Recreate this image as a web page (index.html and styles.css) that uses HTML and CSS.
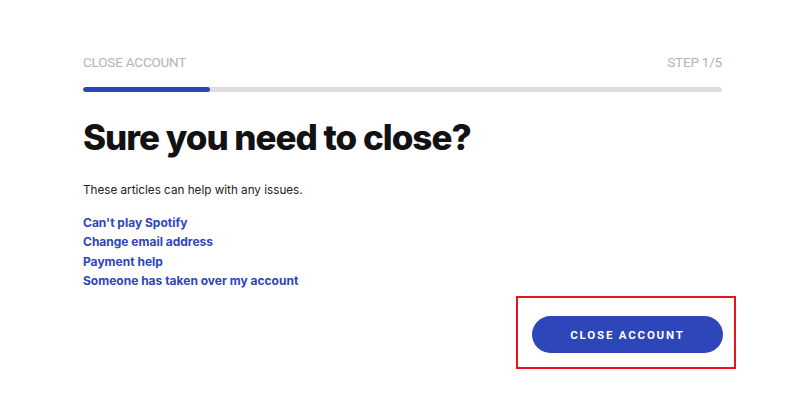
FILE: index.html
```html
<!DOCTYPE html>
<html lang="en">
<head>
  <meta charset="UTF-8" />
  <title>Close account</title>
  <link rel="stylesheet" href="styles.css">
</head>
<body>
  <main class="container">
    <header class="step-header">
      <span>CLOSE ACCOUNT</span>
      <span>STEP 1/5</span>
    </header>

    <!-- Progreso -->
    <div class="progress">
      <div class="progress-fill"></div>
    </div>

    <h1>Sure you need to close?</h1>

    <p class="intro">These articles can help with any issues.</p>

    <ul class="help-links">
      <li><a href="#">Can't play Spotify</a></li>
      <li><a href="#">Change email address</a></li>
      <li><a href="#">Payment help</a></li>
      <li><a href="#">Someone has taken over my account</a></li>
    </ul>

    <div class="actions">
      <div class="highlight">
        <button type="button">CLOSE ACCOUNT</button>
      </div>
    </div>
  </main>
</body>
</html>
```

FILE: styles.css
```css
* {
  box-sizing: border-box;
  margin: 0;
  padding: 0;
}

body {
  font-family: 'Roboto', 'Liberation Sans', sans-serif;
  background: #ffffff;
  color: #181818;
}

.container {
  width: 722px;
  padding-left: 83px;
  padding-top: 54px;
}

.step-header {
  display: flex;
  justify-content: space-between;
  font-size: 13.5px;
  line-height: 16px;
  color: #b3b3b3;
  letter-spacing: -0.2px;
}

.progress {
  margin-top: 17px;
  height: 5px;
  background: #dedede;
  border-radius: 3px;
  overflow: hidden;
}

.progress-fill {
  width: 127px;
  height: 100%;
  background: #2d46b9;
  border-radius: 3px;
}

h1 {
  font-family: 'Inter', sans-serif;
  font-weight: 800;
  font-size: 35px;
  line-height: 40px;
  letter-spacing: -1px;
  margin-top: 25px;
  color: #121212;
}

.intro {
  font-family: 'Inter', sans-serif;
  font-size: 11.7px;
  margin-top: 26px;
  color: #222;
}

.help-links {
  list-style: none;
  margin-top: 16px;
  font-family: 'Inter', sans-serif;
  font-size: 12px;
  line-height: 19.3px;
}

.help-links a {
  font-weight: 700;
  color: #2d46b9;
  text-decoration: none;
}

.actions {
  display: flex;
  justify-content: flex-end;
  margin-right: -14px;
  margin-top: 6px;
}

.highlight {
  border: 2px solid #e8131b;
  padding: 18px 11px 14px 14px;
}

button {
  width: 191px;
  height: 37px;
  border: none;
  border-radius: 19px;
  background: #2d46b9;
  color: #ffffff;
  font-family: 'Roboto', sans-serif;
  font-weight: 700;
  font-size: 11.5px;
  letter-spacing: 1.8px;
  cursor: pointer;
}
```
